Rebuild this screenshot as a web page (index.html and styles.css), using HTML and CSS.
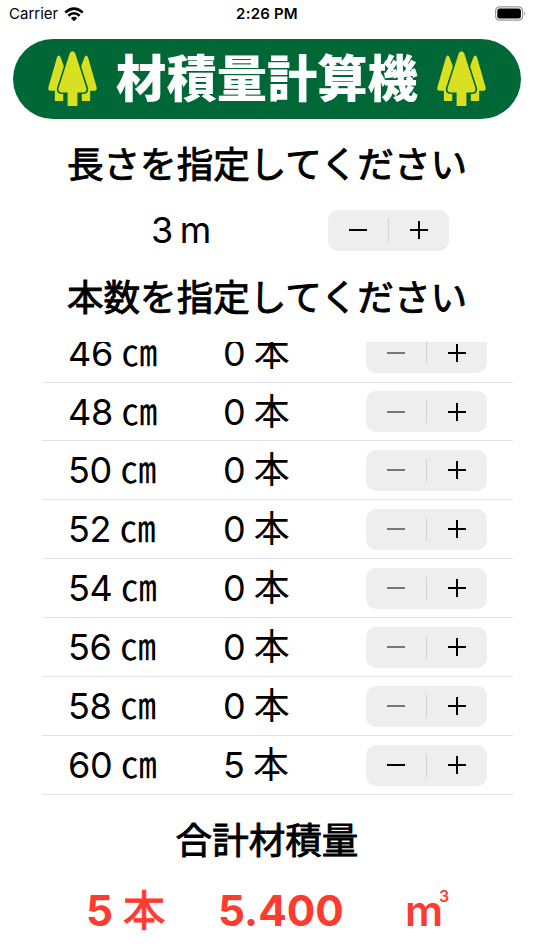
FILE: index.html
```html
<!DOCTYPE html>
<html lang="ja">
<head>
<meta charset="utf-8">
<title>材積量計算機</title>
<link rel="stylesheet" href="styles.css">
</head>
<body>
<svg class="defs" width="0" height="0">
  <symbol id="trees" viewBox="0 0 50 58">
    <g class="leaf">
      <path d="M9.2 6.2Q11 3 12.8 6.2L24 37Q25 40.500 22 40.500H15.500V51H7V40.500H2Q-.3 40 .4 37Z"/>
      <path d="M40.800 6.200Q39 3 37.200 6.200L26 37Q25 40.500 28 40.500H34.500V51H43V40.500H48Q50.300 40 49.600 37Z"/>
      <path class="front" d="M22.300 2Q25 -1.600 27.700 2L39.200 38Q39.700 42 36.500 42.200H30V56H20V42.200H13.500Q10.300 42 10.800 38Z"/>
      <path d="M22.300 2Q25 -1.600 27.700 2L39.200 38Q39.700 42 36.500 42.200H30V56H20V42.200H13.500Q10.300 42 10.800 38Z"/>
    </g>
  </symbol>
</svg>
<header class="status">
  <div class="carrier">Carrier
    <svg width="20" height="15" viewBox="0 0 20 15"><g fill="none" stroke="#000" stroke-width="2.500"><path d="M1.200 5.500Q10 -2.300 18.800 5.500"/><path d="M4.300 8.800Q10 3.700 15.700 8.800"/></g><path d="M6.900 11.200Q10 8.500 13.100 11.200L10 14.300Z"/></svg>
  </div>
  <div class="time">2:26 PM</div>
  <svg class="battery" width="32" height="15" viewBox="0 0 32 15"><rect x=".6" y=".8" width="27" height="13.400" rx="4" fill="none" stroke="#999" stroke-width="1.200"/><rect x="2.300" y="2.500" width="23.600" height="10" rx="2.300"/><path d="M29.200 5.200Q31.200 7.500 29.200 9.800Z" fill="#999"/></svg>
</header>
<div class="banner">
  <svg class="trees" viewBox="0 0 50 58"><use href="#trees"/></svg>
  <h1>材積量計算機</h1>
  <svg class="trees" viewBox="0 0 50 58"><use href="#trees"/></svg>
</div>
<h2 class="length-title">長さを指定してください</h2>
<div class="length">
  <span>3 m</span>
  <div class="stepper"><i class="minus"></i><i class="plus"></i></div>
</div>
<h2 class="count-title">本数を指定してください</h2>
<div class="list">
  <div class="row"><span>46 ㎝</span><span>0 本</span><div class="stepper off"><i class="minus"></i><i class="plus"></i></div></div>
  <div class="row"><span>48 ㎝</span><span>0 本</span><div class="stepper off"><i class="minus"></i><i class="plus"></i></div></div>
  <div class="row"><span>50 ㎝</span><span>0 本</span><div class="stepper off"><i class="minus"></i><i class="plus"></i></div></div>
  <div class="row"><span>52 ㎝</span><span>0 本</span><div class="stepper off"><i class="minus"></i><i class="plus"></i></div></div>
  <div class="row"><span>54 ㎝</span><span>0 本</span><div class="stepper off"><i class="minus"></i><i class="plus"></i></div></div>
  <div class="row"><span>56 ㎝</span><span>0 本</span><div class="stepper off"><i class="minus"></i><i class="plus"></i></div></div>
  <div class="row"><span>58 ㎝</span><span>0 本</span><div class="stepper off"><i class="minus"></i><i class="plus"></i></div></div>
  <div class="row"><span>60 ㎝</span><span>5 本</span><div class="stepper"><i class="minus"></i><i class="plus"></i></div></div>
</div>
<h2 class="total-title">合計材積量</h2>
<div class="total">
  <span>5 <span class="unit">本</span></span><span>5.400</span><span class="cubic">m<sup>3</sup></span>
</div>
</body>
</html>
```
FILE: styles.css
```css
* { box-sizing: border-box; }
body {
  margin: 0;
  width: 534px;
  height: 950px;
  overflow: hidden;
  background: #fff;
  color: #000;
  font-family: Inter, "Noto Sans CJK JP", sans-serif;
  display: flex;
  flex-direction: column;
}
h1, h2 { margin: 0; white-space: nowrap; }
.defs { display: none; }
.status {
  height: 39px;
  padding: 0 7px 11px 9px;
  display: grid;
  grid-template-columns: 1fr auto 1fr;
  align-items: center;
  flex: none;
}
.carrier { display: flex; align-items: center; gap: 6px; font-size: 15px; line-height: 20px; }
.time { font-size: 15px; font-weight: 600; letter-spacing: .2px; line-height: 20px; padding-right: 2px; }
.battery { justify-self: end; align-self: start; margin-top: 6px; }
.banner {
  flex: none;
  height: 79.500px;
  margin: 0 13px;
  padding: 0 35px;
  border-radius: 40px;
  background: #006837;
  display: flex;
  align-items: center;
  justify-content: space-between;
}
.banner h1 {
  color: #fff;
  font-size: 50.300px;
  line-height: 60px;
  font-weight: 900;
}
.trees { width: 49px; height: 57px; margin-top: 1px; }
.leaf { fill: #d9e021; }
.front { stroke: #006837; stroke-width: 3.400; }
h2 {
  flex: none;
  height: 44px;
  line-height: 44px;
  font-size: 36.600px;
  font-weight: 400;
  text-align: center;
  -webkit-text-stroke: .9px #000;
}
.length-title { margin-top: 24.500px; }
.length {
  flex: none;
  height: 44px;
  margin-top: 21px;
  padding: 0 85px 0 151px;
  display: flex;
  align-items: center;
  justify-content: space-between;
  font-size: 36px;
  line-height: 44px;
  word-spacing: -3px;
  letter-spacing: -.3px;
}
.count-title { margin-top: 24px; }
.list {
  flex: none;
  height: 453.500px;
  margin: 21.500px 21px 0 42px;
  display: flex;
  flex-direction: column;
  justify-content: flex-end;
  overflow: hidden;
}
.row {
  flex: none;
  height: 58.930px;
  padding-left: 26px;
  border-bottom: 1px solid #e2e2e2;
  display: grid;
  grid-template-columns: 155px 143px auto;
  align-items: center;
  justify-content: start;
  font-size: 36px;
  line-height: 44px;
  letter-spacing: -.3px;
  word-spacing: -1.500px;
  white-space: nowrap;
}
.stepper {
  width: 121px;
  height: 41px;
  border-radius: 10px;
  background: linear-gradient(#d2d2d4, #d2d2d4) center / 1px 23px no-repeat #eee;
  display: grid;
  grid-template-columns: 1fr 1fr;
  place-items: center;
}
.minus, .plus {
  width: 18px;
  height: 18px;
  background: linear-gradient(#000, #000) center / 18px 2px no-repeat;
}
.plus {
  background: linear-gradient(#000, #000) center / 18px 2px no-repeat,
    linear-gradient(#000, #000) center / 2px 18px no-repeat;
}
.off .minus { opacity: .5; }
.total-title { margin-top: 24px; }
.total {
  flex: none;
  height: 50px;
  margin-top: 23px;
  padding-left: 86px;
  display: grid;
  grid-template-columns: 132px 187px auto;
  justify-content: start;
  color: #ff3b30;
  font-size: 42.300px;
  font-weight: 700;
  line-height: 50px;
  white-space: nowrap;
}
.unit { font-weight: 400; -webkit-text-stroke: 1px #ff3b30; }
.cubic { display: flex; font-weight: 600; }
sup { font-size: 16px; line-height: 20px; margin: 0 0 0 -4px; }
```
